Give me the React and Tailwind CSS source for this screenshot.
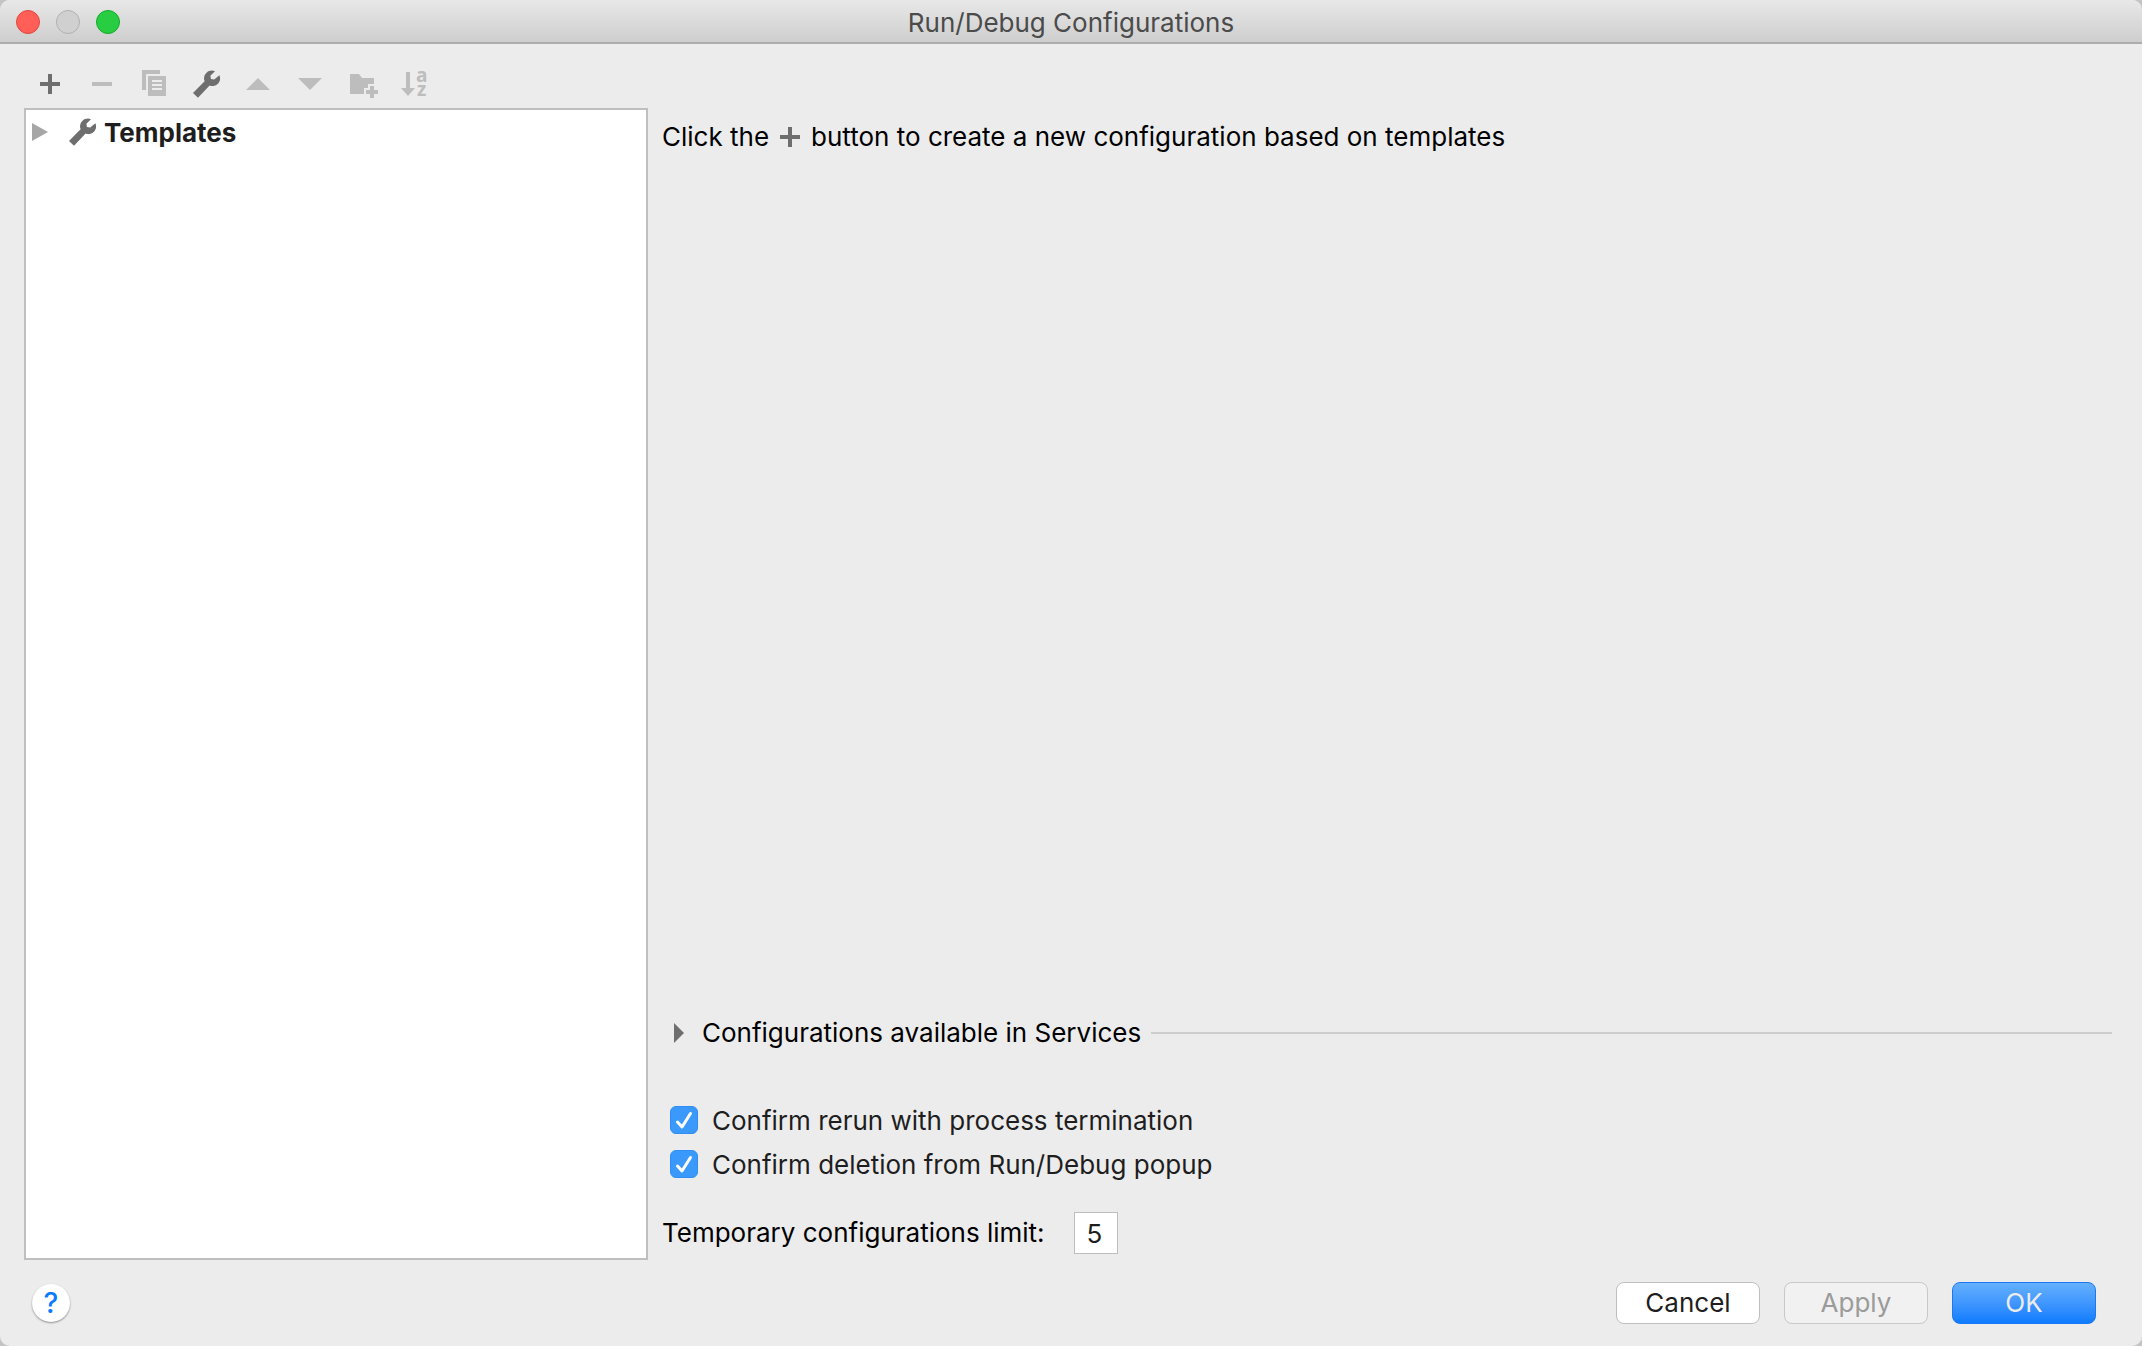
import React, { useState } from 'react';

const PlusIcon = () => (
  <svg viewBox="0 0 32 32" className="size-8 shrink-0" fill="currentColor">
    <path d="M14 6h4v8h8v4h-8v8h-4v-8H6v-4h8z" />
  </svg>
);

const MinusIcon = () => (
  <svg viewBox="0 0 32 32" className="size-8" fill="currentColor">
    <path d="M6 14h20v4H6z" />
  </svg>
);

const CopyIcon = () => (
  <svg viewBox="0 0 32 32" className="size-8" fill="currentColor" fillRule="evenodd">
    <path d="M4 2h18v4H8v16H4z" />
    <path d="M10 8h18v20H10zM14 12v2h10v-2zM14 16v2h10v-2zM14 20v2h10v-2z" />
  </svg>
);

const WrenchIcon = () => (
  <svg viewBox="0 0 32 32" className="size-8 shrink-0" fill="currentColor">
    <path d="M25 3.2 20.400 7.800 20.900 11.100 24.200 11.600 29.400 7.200C30.900 10.500 29.900 14 27.600 16C25.200 18.200 22 18.600 19.600 17.600L8 29.700 3 25 14.600 13.200C13.400 10.500 14 7.200 16.300 5C18.700 2.600 22 2 25 3.200z" />
  </svg>
);

const UpIcon = () => (
  <svg viewBox="0 0 32 32" className="size-8" fill="currentColor">
    <path d="M16 10 28 22H4z" />
  </svg>
);

const DownIcon = () => (
  <svg viewBox="0 0 32 32" className="size-8" fill="currentColor">
    <path d="M4 10h24L16 22z" />
  </svg>
);

const FolderIcon = () => (
  <svg viewBox="0 0 32 32" className="size-8" fill="currentColor">
    <path d="M4 6h9l3 4h12v6h-6v4h-4v6H4z" />
    <path d="M24 18h4v4h4v4h-4v4h-4v-4h-4v-4h4z" />
  </svg>
);

const SortIcon = () => (
  <svg viewBox="0 0 32 32" className="size-8 overflow-visible" fill="currentColor">
    <path d="M8 4h4v16h5l-7 8-7-8h5z" />
    <text fontSize="19" fontWeight="700" fontFamily="Open Sans, sans-serif">
      <tspan x="18" y="14">a</tspan>
      <tspan x="19" y="28">z</tspan>
    </text>
  </svg>
);

const ferramentas = [
  { nome: 'Add', Icone: PlusIcon, ativo: true },
  { nome: 'Remove', Icone: MinusIcon, ativo: false },
  { nome: 'Copy', Icone: CopyIcon, ativo: false },
  { nome: 'Edit templates', Icone: WrenchIcon, ativo: true },
  { nome: 'Move up', Icone: UpIcon, ativo: false },
  { nome: 'Move down', Icone: DownIcon, ativo: false },
  { nome: 'New folder', Icone: FolderIcon, ativo: false },
  { nome: 'Sort', Icone: SortIcon, ativo: false },
];

const Opcao = ({ id, texto, marcado, onChange }) => (
  <div className="flex h-11 items-center">
    <span className="grid size-7 shrink-0">
      <input
        id={id}
        type="checkbox"
        checked={marcado}
        onChange={e => onChange(e.target.checked)}
        className="col-start-1 row-start-1 size-7 appearance-none rounded-md border border-[#b5b5b5] bg-white checked:border-[#2f8ef5] checked:bg-[#3b99fc]"
      />
      {marcado && (
        <svg viewBox="0 0 28 28" className="pointer-events-none col-start-1 row-start-1 size-7" fill="none" stroke="white" strokeWidth="3" strokeLinecap="round" strokeLinejoin="round">
          <path d="M7.500 16 12 21 20.500 7.500" />
        </svg>
      )}
    </span>
    <label htmlFor={id} className="pt-0.5 pl-3.5 text-[#1e1e1e]">{texto}</label>
  </div>
);

const App = () => {
  const [confirmRerun, setConfirmRerun] = useState(true);
  const [confirmDeletion, setConfirmDeletion] = useState(true);
  const [limite, setLimite] = useState('5');

  return (
    <div className="min-h-screen bg-[#c4c4c4] font-['Inter',sans-serif] text-[26px] leading-8 text-black">
      <div className="flex min-h-screen flex-col overflow-hidden rounded-[10px] bg-[#ececec]">
        <header className="grid h-11 grid-cols-[1fr_auto_1fr] items-center border-b-2 border-[#adadad] bg-linear-to-b from-[#e8e8e8] to-[#cecece] pt-0.5">
          <div className="flex gap-4 pl-4">
            <button aria-label="Close" className="size-6 rounded-full border border-[#e2463f] bg-[#ff5f57]" />
            <button aria-label="Minimize" disabled className="size-6 rounded-full border border-[#b0b0b0] bg-[#d0d0d0]" />
            <button aria-label="Zoom" className="size-6 rounded-full border border-[#12ac28] bg-[#28cd41]" />
          </div>
          <h1 className="pt-0.5 text-[#4b4b4b]">Run/Debug Configurations</h1>
        </header>

        <main className="flex grow pl-6">
          <section className="flex w-[624px] shrink-0 flex-col">
            <div className="flex gap-5 px-2.5 pt-6 pb-2">
              {ferramentas.map(({ nome, Icone, ativo }) => (
                <button
                  key={nome}
                  aria-label={nome}
                  disabled={!ativo}
                  className={ativo ? 'text-[#6e6e6e]' : 'text-[#bdbdbd]'}
                >
                  <Icone />
                </button>
              ))}
            </div>
            <div className="grow border-2 border-[#bfbfbf] bg-white">
              <button className="flex h-11 w-full items-center pl-1.5 text-[#1e1e1e]">
                <svg viewBox="0 0 16 18" className="mr-[18px] h-[18px] w-4 shrink-0" fill="#a6a6a6">
                  <path d="M0 0 16 9 0 18z" />
                </svg>
                <span className="text-[#6e6e6e]"><WrenchIcon /></span>
                <span className="pt-0.5 pl-1.5 font-bold">Templates</span>
              </button>
            </div>
          </section>

          <section className="flex min-w-0 grow flex-col pt-[77px] pr-[30px] pb-1.5 pl-3.5">
            <p className="flex items-center">
              Click the
              <span className="px-[5px] text-[#6e6e6e]"><PlusIcon /></span>
              button to create a new configuration based on templates
            </p>

            <div className="mt-auto flex items-center gap-2.5 pl-3">
              <button className="flex items-center gap-[18px]">
                <svg viewBox="0 0 10 20" className="h-5 w-2.5 shrink-0" fill="#6e6e6e">
                  <path d="M0 0 10 10 0 20z" />
                </svg>
                Configurations available in Services
              </button>
              <hr className="grow border-t-2 border-[#cdcdcd]" />
            </div>

            <div className="pt-[49px] pl-2">
              <Opcao id="rerun" texto="Confirm rerun with process termination" marcado={confirmRerun} onChange={setConfirmRerun} />
              <Opcao id="deletion" texto="Confirm deletion from Run/Debug popup" marcado={confirmDeletion} onChange={setConfirmDeletion} />
            </div>

            <div className="flex items-center gap-[29px] pt-[26px]">
              <label htmlFor="limite">Temporary configurations limit:</label>
              <input
                id="limite"
                type="text"
                value={limite}
                onChange={e => setLimite(e.target.value)}
                className="h-[42px] w-11 border border-[#bdbdbd] bg-white pl-3 text-[#1e1e1e]"
              />
            </div>
          </section>
        </main>

        <footer className="flex items-center gap-6 py-[22px] pr-[46px] pl-8">
          <button className="mr-auto size-[38px] rounded-full bg-white text-[28px] font-medium text-[#0a7bff] shadow-[0_1px_2px_rgba(0,0,0,0.4)]">?</button>
          <button className="h-[42px] w-36 rounded-lg border border-[#bfbfbf] bg-white text-[#1e1e1e]">Cancel</button>
          <button disabled className="h-[42px] w-36 rounded-lg border border-[#c8c8c8] bg-[#f1f1f1] text-[#9b9b9b]">Apply</button>
          <button className="h-[42px] w-36 rounded-lg border border-[#1a78f5] bg-linear-to-b from-[#64b0fc] to-[#0a7bff] text-[#ececec]">OK</button>
        </footer>
      </div>
    </div>
  );
};

export default App;
